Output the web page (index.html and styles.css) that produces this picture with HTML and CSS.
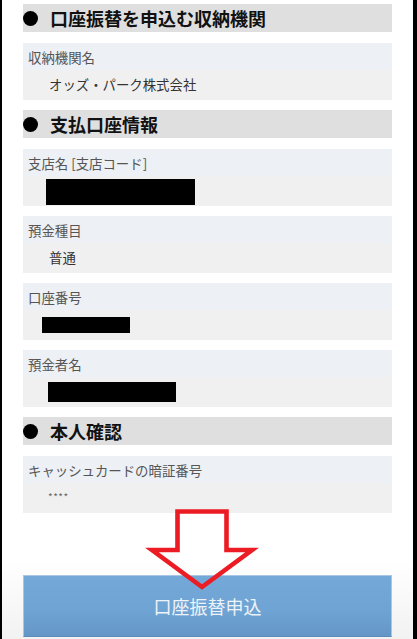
FILE: index.html
```html
<!DOCTYPE html>
<html lang="ja">
<head>
<meta charset="utf-8">
<title>口座振替申込</title>
<link rel="stylesheet" href="styles.css">
</head>
<body>
<div class="page">
  <h2 class="section-head"><span class="dot"></span>口座振替を申込む収納機関</h2>
  <div class="field">
    <div class="label">収納機関名</div>
    <div class="value">オッズ・パーク株式会社</div>
  </div>

  <h2 class="section-head"><span class="dot"></span>支払口座情報</h2>
  <div class="field">
    <div class="label">支店名 [支店コード]</div>
    <div class="value value-redacted"><span class="redact redact-branch"></span></div>
  </div>
  <div class="field">
    <div class="label">預金種目</div>
    <div class="value">普通</div>
  </div>
  <div class="field">
    <div class="label">口座番号</div>
    <div class="value value-redacted"><span class="redact redact-number"></span></div>
  </div>
  <div class="field">
    <div class="label">預金者名</div>
    <div class="value value-redacted"><span class="redact redact-name"></span></div>
  </div>

  <h2 class="section-head"><span class="dot"></span>本人確認</h2>
  <div class="field">
    <div class="label">キャッシュカードの暗証番号</div>
    <div class="value value-pin">****</div>
  </div>

  <button class="submit" type="button">口座振替申込</button>

  <svg class="arrow" width="120" height="90" viewBox="140 500 120 90" aria-hidden="true">
    <polygon points="177.5,511.5 226.5,511.5 226.5,550 252,550 202,587 152,550 177.5,550" fill="none" stroke="#ec1c24" stroke-width="4.6" stroke-linejoin="miter"/>
  </svg>
</div>
</body>
</html>
```

FILE: styles.css
```css
html, body {
  margin: 0;
  padding: 0;
  height: 100%;
  background: #000;
  overflow: hidden;
}

.page {
  position: relative;
  box-sizing: border-box;
  margin-left: 2px;
  width: 411px;
  height: 639px;
  background: linear-gradient(to bottom, #fff 0, #fff 560px, #f2f2f2 639px);
  padding: 4px 21px 0 21px;
  font-family: "Noto Sans CJK JP", "Noto Sans", sans-serif;
  display: flex;
  flex-direction: column;
}

.section-head {
  display: flex;
  align-items: center;
  height: 28px;
  margin: 0 0 11px 0;
  background: #dfdfdf;
  font-size: 18px;
  font-weight: 700;
  color: #111;
  line-height: 1;
  letter-spacing: 0;
  flex: none;
}

.dot {
  display: block;
  width: 15px;
  height: 15px;
  min-width: 15px;
  border-radius: 50%;
  background: #000;
  margin: 1px 12px 0 0;
  flex: none;
}

.field {
  margin-bottom: 10px;
  flex: none;
}

.label {
  height: 27px;
  box-sizing: border-box;
  padding: 0 0 0 5px;
  background: #edf0f4;
  font-size: 13.4px;
  color: #555;
  display: flex;
  align-items: center;
}

.value {
  height: 30px;
  box-sizing: border-box;
  padding: 0 0 2px 26px;
  background: #f0f0f0;
  font-size: 13.4px;
  color: #333;
  display: flex;
  align-items: center;
}

.value-redacted {
  padding-left: 0;
  padding-bottom: 0;
}

.redact {
  display: block;
  background: #000;
}

.redact-branch {
  width: 149px;
  height: 26px;
  margin-left: 23px;
  margin-top: 1px;
}

.redact-number {
  width: 88px;
  height: 16px;
  margin-left: 19px;
}

.redact-name {
  width: 128px;
  height: 20px;
  margin-left: 25px;
}

.value-pin {
  font-size: 10px;
  color: #666;
  letter-spacing: 0.5px;
  padding-left: 25px;
  padding-bottom: 4px;
}

.submit {
  margin-top: 52px;
  height: 62px;
  width: 100%;
  border: 1px solid #a9c6e2;
  border-bottom-color: #5a8cbc;
  background: linear-gradient(to bottom, #73a8d8 0%, #6ea3d3 60%, #6497c8 100%);
  color: #eef3f8;
  font-family: "Noto Sans CJK JP", "Noto Sans", sans-serif;
  font-size: 18px;
  padding: 0;
  flex: none;
}

.arrow {
  position: absolute;
  left: 138px;
  top: 500px;
}
```
